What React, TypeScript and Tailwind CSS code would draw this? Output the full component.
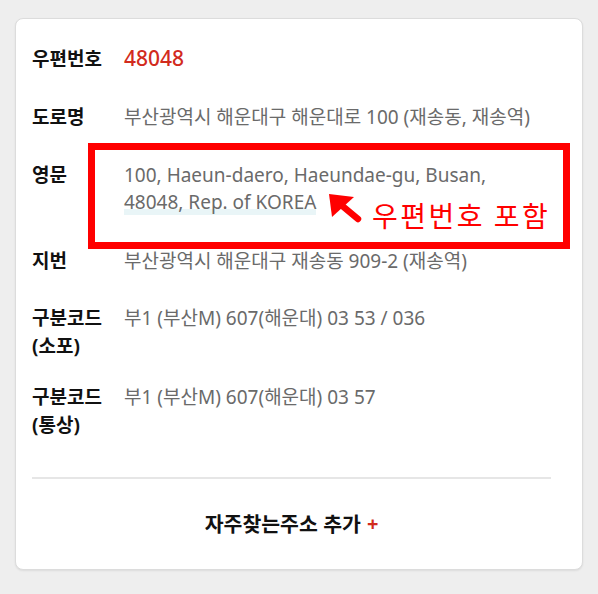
import React from 'react';

const FONT = '"Noto Sans", "Noto Sans CJK KR", sans-serif';

type Row = {
  label: string[];
  value: React.ReactNode;
  mt: string;
};

export default function App() {
  const rows: Row[] = [
    {
      label: ['도로명'],
      value: '부산광역시 해운대구 해운대로 100 (재송동, 재송역)',
      mt: 'mt-[31px]'
    },
    {
      label: ['지번'],
      value: '부산광역시 해운대구 재송동 909-2 (재송역)',
      mt: 'mt-[31px]'
    },
    {
      label: ['구분코드', '(소포)'],
      value: '부1 (부산M) 607(해운대) 03 53 / 036',
      mt: 'mt-[30px]'
    },
    {
      label: ['구분코드', '(통상)'],
      value: '부1 (부산M) 607(해운대) 03 57',
      mt: 'mt-[24px]'
    }
  ];

  return (
    <div className="min-h-screen bg-[#eeeeee] pt-[18px] px-[15px]" style={{ fontFamily: FONT }}>
      <div className="w-[568px] bg-white border border-[#dcdcdc] rounded-[8px] shadow-[0_1px_2px_rgba(0,0,0,0.08)] pl-[16px] pr-[31px] pt-[26px] pb-[31px]">
        {/* 우편번호 */}
        <div className="flex items-center h-[28px]">
          <div className="w-[92px] shrink-0 text-[19px] font-bold text-[#111111]">우편번호</div>
          <div className="text-[21px] font-medium text-[#d22b1d]">48048</div>
        </div>

        {/* 도로명 */}
        <div className={`flex ${rows[0].mt}`}>
          <div className="w-[92px] shrink-0 text-[19px] leading-[27.5px] font-bold text-[#111111]">도로명</div>
          <div className="text-[19px] leading-[27.5px] text-[#6a6a6a]">{rows[0].value}</div>
        </div>

        {/* 영문 - with annotation */}
        <div className="relative flex mt-[30px]">
          <div className="w-[92px] shrink-0 text-[19px] leading-[27.5px] font-bold text-[#111111]">영문</div>
          <div className="text-[19px] leading-[27.5px] text-[#6a6a6a]">
            100, Haeun-daero, Haeundae-gu, Busan,
            <br />
            <span className="bg-[linear-gradient(transparent_78%,#e9f5f7_78%)]">48048, Rep. of KOREA</span>
          </div>

          <div className="absolute left-[56px] top-[-19px] w-[482px] h-[106px] border-[7px] border-[#ff0000]" />
          <svg className="absolute left-[296px] top-[31px]" width="36" height="32" viewBox="0 0 36 32">
            <polygon points="1,1 26,4 4,24" fill="#ff0000" />
            <line x1="12" y1="11" x2="30" y2="26" stroke="#ff0000" strokeWidth="6.5" strokeLinecap="round" />
          </svg>
          <div className="absolute left-[340px] top-[36px] text-[28px] leading-[34px] tracking-[2.5px] text-[#ff0000] whitespace-nowrap" style={{ fontFamily: '"Noto Sans CJK KR", sans-serif' }}>
            우편번호 포함
          </div>
        </div>

        {rows.slice(1).map((row, i) => (
          <div key={i} className={`flex ${row.mt}`}>
            <div className="w-[92px] shrink-0 text-[19px] leading-[27.5px] font-bold text-[#111111]">
              {row.label.map((l) => (
                <div key={l}>{l}</div>
              ))}
            </div>
            <div className="text-[19px] leading-[27.5px] text-[#6a6a6a]">{row.value}</div>
          </div>
        ))}

        <div className="mt-[38px] h-[2px] bg-[#e6e6e6]" />

        <div className="mt-[31px] flex items-center justify-center h-[28px] text-[20.5px] font-bold text-[#111111]">
          자주찾는주소 추가
          <span className="ml-[6px] text-[#d22b1d] text-[20px] leading-none">+</span>
        </div>
      </div>
    </div>
  );
}
